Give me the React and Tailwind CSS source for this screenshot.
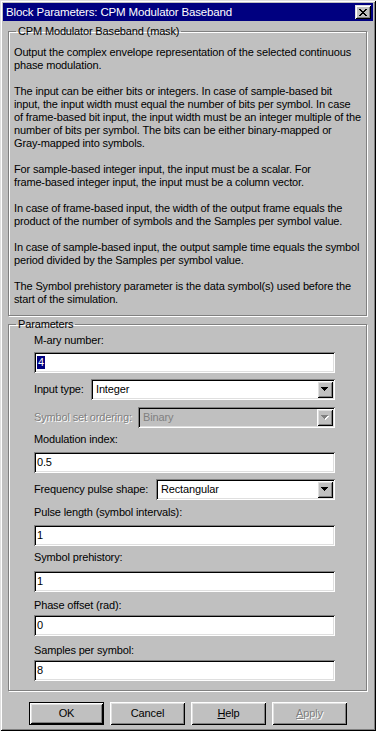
import React from 'react'

const font = "font-['Liberation_Sans',Arial,sans-serif]"

const sunken =
  'shadow-[inset_1px_1px_0_#808080,inset_-1px_-1px_0_#fff,inset_2px_2px_0_#000,inset_-2px_-2px_0_#dfdfdf]'
const raised =
  'shadow-[inset_1px_1px_0_#fff,inset_-1px_-1px_0_#000,inset_2px_2px_0_#dfdfdf,inset_-2px_-2px_0_#808080]'
const raisedSmall = 'shadow-[inset_1px_1px_0_#dfdfdf,inset_-1px_-1px_0_#000,inset_2px_2px_0_#fff,inset_-2px_-2px_0_#808080]'
const etched = 'min-w-0 border border-[#808080] shadow-[inset_1px_1px_0_#fff,1px_1px_0_#fff]'

const paragraphs = [
  ['Output the complex envelope representation of the selected continuous', 'phase modulation.'],
  [
    'The input can be either bits or integers. In case of sample-based bit',
    'input, the input width must equal the number of bits per symbol. In case',
    'of frame-based bit input, the input width must be an integer multiple of the',
    'number of bits per symbol. The bits can be either binary-mapped or',
    'Gray-mapped into symbols.',
  ],
  ['For sample-based integer input, the input must be a scalar. For', 'frame-based integer input, the input must be a column vector.'],
  ['In case of frame-based input, the width of the output frame equals the', 'product of the number of symbols and the Samples per symbol value.'],
  ['In case of sample-based input, the output sample time equals the symbol', 'period divided by the Samples per symbol value.'],
  ['The Symbol prehistory parameter is the data symbol(s) used before the', 'start of the simulation.'],
]

function Arrow({ disabled }) {
  const d = 'M0 0h7v1h-1v1h-1v1h-1v1h-1v-1h-1v-1h-1v-1h-1z'
  return (
    <svg width="8" height="5" viewBox="0 0 8 5" shapeRendering="crispEdges">
      {disabled && <path d={d} fill="#fff" transform="translate(1 1)" />}
      <path d={d} fill={disabled ? '#808080' : '#000'} />
    </svg>
  )
}

function Combo({ value, width, disabled }) {
  return (
    <div className={`flex h-[21px] shrink-0 p-[2px] ${sunken} ${width}`}>
      <div
        className={`flex flex-1 items-center pl-[3px] ${
          disabled ? 'bg-[#c0c0c0] text-[#808080]' : 'bg-white text-black'
        }`}
      >
        {value}
      </div>
      <div className={`flex w-[16px] items-center justify-center bg-[#c0c0c0] ${raised}`}>
        <Arrow disabled={disabled} />
      </div>
    </div>
  )
}

function EditBox({ value, selected, className = '' }) {
  return (
    <div className={`flex h-[21px] w-[301px] items-center bg-white pl-[3px] ${sunken} ${className}`}>
      {selected ? <span className="bg-[#000080] px-[1px] text-white">{value}</span> : value}
    </div>
  )
}

function Label({ children, className = '' }) {
  return <div className={`h-[13px] whitespace-nowrap ${className}`}>{children}</div>
}

function Button({ children, isDefault, disabled }) {
  const edge = isDefault
    ? 'shadow-[inset_0_0_0_1px_#000,inset_2px_2px_0_#fff,inset_-2px_-2px_0_#000,inset_3px_3px_0_#dfdfdf,inset_-3px_-3px_0_#808080]'
    : raised
  return (
    <div
      className={`flex h-[23px] w-[75px] items-center justify-center ${edge} ${
        disabled ? 'text-[#808080] [text-shadow:1px_1px_0_#fff]' : 'text-black'
      }`}
    >
      {children}
    </div>
  )
}

export default function App() {
  return (
    <div
      className={`flex h-[731px] w-[376px] flex-col bg-[#c0c0c0] p-[3px] text-[11px] leading-[13px] tracking-[-0.15px] text-black ${font} shadow-[inset_1px_1px_0_#dfdfdf,inset_-1px_-1px_0_#000,inset_2px_2px_0_#fff,inset_-2px_-2px_0_#808080]`}
    >
      {/* Title bar */}
      <div className="flex h-[18px] items-center justify-between bg-[#000080] pl-[3px] pr-[2px]">
        <span className="text-[11.5px] text-white">Block Parameters: CPM Modulator Baseband</span>
        <div className={`flex h-[14px] w-[16px] items-center justify-center bg-[#c0c0c0] ${raisedSmall}`}>
          <svg width="8" height="7" viewBox="0 0 8 7" shapeRendering="crispEdges">
            <path
              d="M0 0h2v1h-2zM6 0h2v1h-2zM1 1h2v1h-2zM5 1h2v1h-2zM2 2h4v1h-4zM3 3h2v1h-2zM2 4h4v1h-4zM1 5h2v1h-2zM5 5h2v1h-2zM0 6h2v1h-2zM6 6h2v1h-2z"
              fill="#000"
            />
          </svg>
        </div>
      </div>

      {/* Mask description */}
      <fieldset className={`ml-[5px] mt-[4px] w-[359px] pb-[9px] pl-[5px] pt-[8px] ${etched}`}>
        <legend className="ml-[2px] px-[2px]">CPM Modulator Baseband (mask)</legend>
        <div className="flex flex-col gap-[13px]">
          {paragraphs.map((lines, i) => (
            <div key={i}>
              {lines.map((line) => (
                <div key={line} className="whitespace-nowrap">
                  {line}
                </div>
              ))}
            </div>
          ))}
        </div>
      </fieldset>

      {/* Parameters */}
      <fieldset className={`ml-[5px] mt-[2px] w-[359px] pb-[9px] pl-[5px] ${etched}`}>
        <legend className="ml-[2px] px-[2px]">Parameters</legend>
        <div className="flex flex-col pl-[20px]">
          <Label className="mt-[3px]">M-ary number:</Label>
          <EditBox value="4" selected className="mt-[5px]" />
          <div className="mt-[6px] flex w-[301px] items-center justify-between whitespace-nowrap">
            <span>Input type:</span>
            <Combo value="Integer" width="w-[244px]" />
          </div>
          <div className="mt-[7px] flex w-[301px] items-center justify-between whitespace-nowrap">
            <span className="text-[#808080] [text-shadow:1px_1px_0_#fff]">Symbol set ordering:</span>
            <Combo value="Binary" width="w-[197px]" disabled />
          </div>
          <Label className="mt-[5px]">Modulation index:</Label>
          <EditBox value="0.5" className="mt-[6px]" />
          <div className="mt-[6px] flex w-[301px] items-center justify-between whitespace-nowrap">
            <span>Frequency pulse shape:</span>
            <Combo value="Rectangular" width="w-[179px]" />
          </div>
          <Label className="mt-[6px]">Pulse length (symbol intervals):</Label>
          <EditBox value="1" className="mt-[6px]" />
          <Label className="mt-[5px]">Symbol prehistory:</Label>
          <EditBox value="1" className="mt-[7px]" />
          <Label className="mt-[7px]">Phase offset (rad):</Label>
          <EditBox value="0" className="mt-[3px]" />
          <Label className="mt-[8px]">Samples per symbol:</Label>
          <EditBox value="8" className="mt-[3px]" />
        </div>
      </fieldset>

      {/* Buttons */}
      <div className="ml-[26px] mt-[11px] flex gap-[6px]">
        <Button isDefault>OK</Button>
        <Button>Cancel</Button>
        <Button>
          <span className="underline decoration-1 underline-offset-[1px]">H</span>elp
        </Button>
        <Button disabled>
          <span className="underline decoration-1 underline-offset-[1px]">A</span>pply
        </Button>
      </div>
    </div>
  )
}
